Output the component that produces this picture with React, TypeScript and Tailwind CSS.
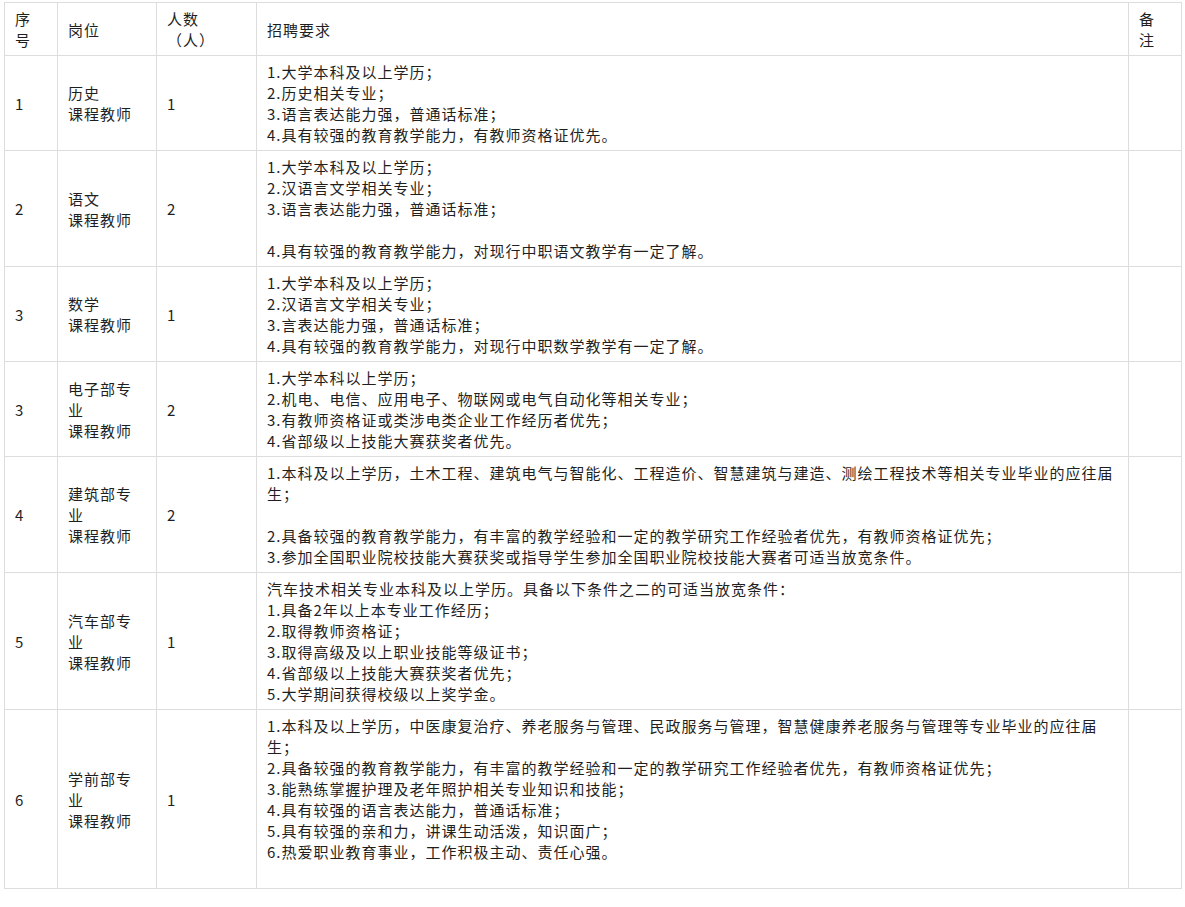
const ROWS: { no: string; post: string; count: string; req: string[] }[] = [
  {
    no: "1",
    post: "历史\n课程教师",
    count: "1",
    req: [
      "1.大学本科及以上学历；",
      "2.历史相关专业；",
      "3.语言表达能力强，普通话标准；",
      "4.具有较强的教育教学能力，有教师资格证优先。",
    ],
  },
  {
    no: "2",
    post: "语文\n课程教师",
    count: "2",
    req: [
      "1.大学本科及以上学历；",
      "2.汉语言文学相关专业；",
      "3.语言表达能力强，普通话标准；",
      "",
      "4.具有较强的教育教学能力，对现行中职语文教学有一定了解。",
    ],
  },
  {
    no: "3",
    post: "数学\n课程教师",
    count: "1",
    req: [
      "1.大学本科及以上学历；",
      "2.汉语言文学相关专业；",
      "3.言表达能力强，普通话标准；",
      "4.具有较强的教育教学能力，对现行中职数学教学有一定了解。",
    ],
  },
  {
    no: "3",
    post: "电子部专业\n课程教师",
    count: "2",
    req: [
      "1.大学本科以上学历；",
      "2.机电、电信、应用电子、物联网或电气自动化等相关专业；",
      "3.有教师资格证或类涉电类企业工作经历者优先；",
      "4.省部级以上技能大赛获奖者优先。",
    ],
  },
  {
    no: "4",
    post: "建筑部专业\n课程教师",
    count: "2",
    req: [
      "1.本科及以上学历，土木工程、建筑电气与智能化、工程造价、智慧建筑与建造、测绘工程技术等相关专业毕业的应往届生；",
      "",
      "2.具备较强的教育教学能力，有丰富的教学经验和一定的教学研究工作经验者优先，有教师资格证优先；",
      "3.参加全国职业院校技能大赛获奖或指导学生参加全国职业院校技能大赛者可适当放宽条件。",
    ],
  },
  {
    no: "5",
    post: "汽车部专业\n课程教师",
    count: "1",
    req: [
      "汽车技术相关专业本科及以上学历。具备以下条件之二的可适当放宽条件：",
      "1.具备2年以上本专业工作经历；",
      "2.取得教师资格证；",
      "3.取得高级及以上职业技能等级证书；",
      "4.省部级以上技能大赛获奖者优先；",
      "5.大学期间获得校级以上奖学金。",
    ],
  },
  {
    no: "6",
    post: "学前部专业\n课程教师",
    count: "1",
    req: [
      "1.本科及以上学历，中医康复治疗、养老服务与管理、民政服务与管理，智慧健康养老服务与管理等专业毕业的应往届生；",
      "2.具备较强的教育教学能力，有丰富的教学经验和一定的教学研究工作经验者优先，有教师资格证优先；",
      "3.能熟练掌握护理及老年照护相关专业知识和技能；",
      "4.具有较强的语言表达能力，普通话标准；",
      "5.具有较强的亲和力，讲课生动活泼，知识面广；",
      "6.热爱职业教育事业，工作积极主动、责任心强。",
      "",
    ],
  },
];

const cell =
  "border border-[#dddddd] px-[10px] py-[5px] align-middle text-left font-normal";

function Lines({ items }: { items: string[] }) {
  return (
    <>
      {items.map((t, i) => (
        <div key={i}>{t === "" ? "\u00a0" : t}</div>
      ))}
    </>
  );
}

export default function App() {
  return (
    <div className="min-h-[907px] w-[1185px] bg-white pl-[4px] pt-[2px]">
      <table
        className="w-[1177px] table-fixed border-collapse text-[15px] leading-[21px] tracking-[1px] text-[#1f1f1f]"
        style={{ fontFamily: '"Noto Sans CJK SC", "Noto Sans", sans-serif' }}
      >
        <colgroup>
          <col className="w-[53px]" />
          <col className="w-[99px]" />
          <col className="w-[100px]" />
          <col className="w-[872px]" />
          <col className="w-[53px]" />
        </colgroup>
        <thead>
          <tr>
            <th className={cell}>
              序<br />号
            </th>
            <th className={cell}>岗位</th>
            <th className={cell}>
              人数
              <br />
              （人）
            </th>
            <th className={cell}>招聘要求</th>
            <th className={cell}>
              备<br />注
            </th>
          </tr>
        </thead>
        <tbody>
          {ROWS.map((r, i) => (
            <tr key={i}>
              <td className={cell}>{r.no}</td>
              <td className={cell}>
                {r.post.split("\n").map((p, j) => (
                  <div key={j}>{p}</div>
                ))}
              </td>
              <td className={cell}>{r.count}</td>
              <td className={cell}>
                <Lines items={r.req} />
              </td>
              <td className={cell} />
            </tr>
          ))}
        </tbody>
      </table>
    </div>
  );
}

function cn(...c: string[]) {
  return c.join(" ");
}
